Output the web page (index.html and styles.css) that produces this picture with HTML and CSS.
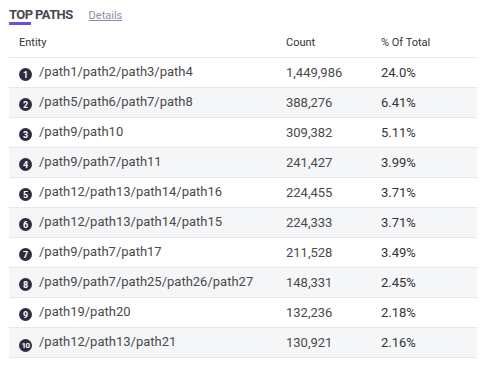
FILE: index.html
```html
<!DOCTYPE html>
<html lang="en">
<head>
    <meta charset="UTF-8">
    <meta name="viewport" content="width=device-width, initial-scale=1.0">
    <title>Top Paths</title>
    <link rel="stylesheet" href="styles.css">
</head>
<body>
    <div class="widget">
        <div class="widget-head">
            <span class="tab active">TOP PATHS</span>
            <a class="details" href="#">Details</a>
        </div>

        <table class="paths">
            <colgroup>
                <col class="col-entity">
                <col class="col-count">
                <col>
            </colgroup>
            <thead>
                <tr>
                    <th>Entity</th>
                    <th>Count</th>
                    <th>% Of Total</th>
                </tr>
            </thead>
            <tbody>
                <tr><td><span class="rank">1</span>/path1/path2/path3/path4</td><td>1,449,986</td><td class="pct">24.0%</td></tr>
                <tr><td><span class="rank">2</span>/path5/path6/path7/path8</td><td>388,276</td><td class="pct">6.41%</td></tr>
                <tr><td><span class="rank">3</span>/path9/path10</td><td>309,382</td><td class="pct">5.11%</td></tr>
                <tr><td><span class="rank">4</span>/path9/path7/path11</td><td>241,427</td><td class="pct">3.99%</td></tr>
                <tr><td><span class="rank">5</span>/path12/path13/path14/path16</td><td>224,455</td><td class="pct">3.71%</td></tr>
                <tr><td><span class="rank">6</span>/path12/path13/path14/path15</td><td>224,333</td><td class="pct">3.71%</td></tr>
                <tr><td><span class="rank">7</span>/path9/path7/path17</td><td>211,528</td><td class="pct">3.49%</td></tr>
                <tr><td><span class="rank">8</span>/path9/path7/path25/path26/path27</td><td>148,331</td><td class="pct">2.45%</td></tr>
                <tr><td><span class="rank">9</span>/path19/path20</td><td>132,236</td><td class="pct">2.18%</td></tr>
                <tr><td><span class="rank small">10</span>/path12/path13/path21</td><td>130,921</td><td class="pct">2.16%</td></tr>
            </tbody>
        </table>
    </div>
</body>
</html>
```

FILE: styles.css
```css
body {
    margin: 0;
    background: #fff;
    font-family: Roboto, "Liberation Sans", sans-serif;
    color: #444;
}
.widget {
    padding: 0 9px;
}
.widget-head {
    display: flex;
    align-items: flex-start;
    height: 28px;
}
.tab {
    font-size: 13px;
    font-weight: bold;
    color: #474752;
    line-height: 16px;
    padding-top: 7px;
    position: relative;
    letter-spacing: -0.6px;
}
.tab.active::after {
    content: "";
    position: absolute;
    left: 0;
    top: 22px;
    width: 22px;
    height: 3px;
    background: #6c4de6;
}
.details {
    margin-left: 16px;
    margin-top: 9px;
    font-size: 11px;
    color: #8b8fa6;
    text-decoration: underline;
}
.paths {
    width: 468px;
    border-collapse: collapse;
    table-layout: fixed;
}
.col-entity {
    width: 277px;
}
.col-count {
    width: 95px;
}
.paths th {
    font-size: 11px;
    font-weight: normal;
    color: #333;
    text-align: left;
    height: 29px;
    padding: 0;
    border-bottom: 1px solid #e6e7eb;
}
.paths th:first-child,
.paths td:first-child {
    padding-left: 10px;
}
.paths td {
    height: 29px;
    padding: 0;
    font-size: 13px;
    color: #4a4a4a;
    border-bottom: 1px solid #e6e7eb;
    white-space: nowrap;
}
.paths tbody tr:nth-child(even) td {
    background: #f5f6f8;
}
.paths td.pct {
    color: #333;
}
.rank {
    display: inline-flex;
    align-items: center;
    justify-content: center;
    width: 13px;
    height: 13px;
    border-radius: 50%;
    background: #2d2b3d;
    color: #fff;
    font-size: 9px;
    font-weight: bold;
    margin-right: 7px;
    vertical-align: -2px;
}
.rank.small {
    font-size: 8px;
    letter-spacing: -0.6px;
}
```
